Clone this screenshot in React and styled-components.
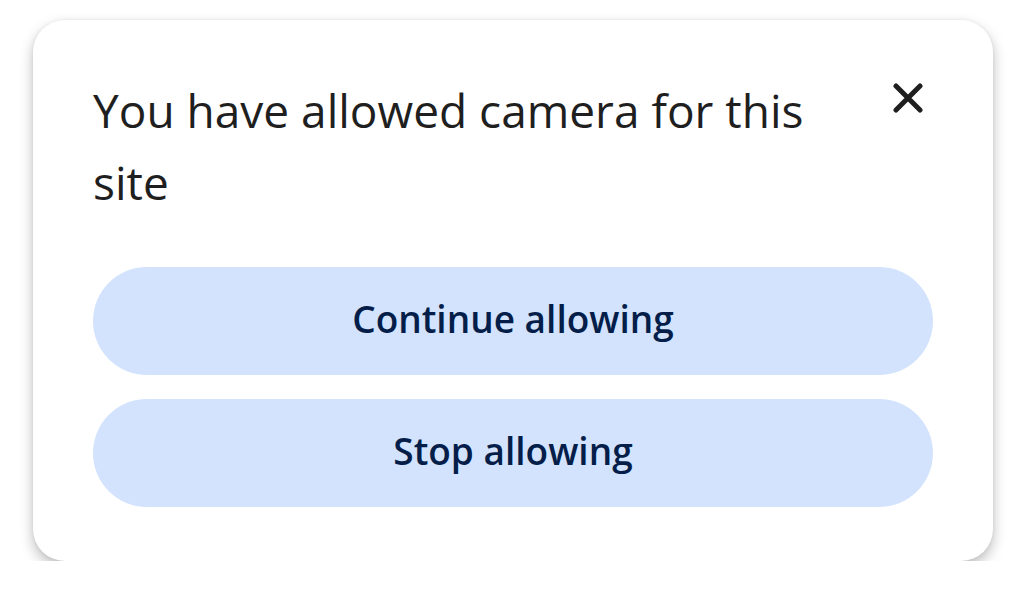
import React from "react";
import styled, { createGlobalStyle } from "styled-components";

const GlobalStyle = createGlobalStyle`
    html, body {
        margin: 0;
        background: #ffffff;
    }
    body {
        font-family: "Open Sans", Roboto, sans-serif;
    }
`;

const Page = styled.div`
    padding: 20px 33px 0 33px;
`;

const Card = styled.div`
    box-sizing: border-box;
    width: 960px;
    height: 541px;
    padding: 54px 60px 54px 60px;
    background: #ffffff;
    border-radius: 32px;
    box-shadow: 0 6px 14px rgba(0, 0, 0, 0.26), 0 0 4px rgba(0, 0, 0, 0.06);
    display: flex;
    flex-direction: column;
`;

const Header = styled.div`
    display: flex;
    align-items: flex-start;
    justify-content: space-between;
`;

const Title = styled.h1`
    margin: 0;
    max-width: 740px;
    font-family: "Open Sans", Roboto, sans-serif;
    font-size: 46px;
    line-height: 72px;
    font-weight: 400;
    color: #1f1f1f;
`;

const CloseButton = styled.button`
    border: none;
    background: none;
    padding: 0;
    margin: -1px 0 0 0;
    width: 50px;
    height: 50px;
    display: flex;
    align-items: center;
    justify-content: center;
    cursor: pointer;
`;

const Actions = styled.div`
    margin-top: auto;
    display: flex;
    flex-direction: column;
    gap: 24px;
`;

const PillButton = styled.button`
    height: 108px;
    padding: 0 0 5px 0;
    border: none;
    border-radius: 54px;
    background: #d3e3fd;
    color: #041e49;
    font-family: "Open Sans", Roboto, sans-serif;
    font-size: 37px;
    font-weight: 600;
    cursor: pointer;
`;

function CloseIcon() {
    return (
        <svg width="30" height="30" viewBox="0 0 30 30">
            <path d="M3 3 L27 27 M27 3 L3 27" stroke="#1f1f1f" strokeWidth="5" strokeLinecap="round" fill="none" />
        </svg>
    );
}

export default function App() {
    return (
        <Page>
            <GlobalStyle />
            <Card>
                <Header>
                    <Title>You have allowed camera for this site</Title>
                    <CloseButton type="button" aria-label="Close">
                        <CloseIcon />
                    </CloseButton>
                </Header>
                <Actions>
                    <PillButton type="button">Continue allowing</PillButton>
                    <PillButton type="button">Stop allowing</PillButton>
                </Actions>
            </Card>
        </Page>
    );
}
